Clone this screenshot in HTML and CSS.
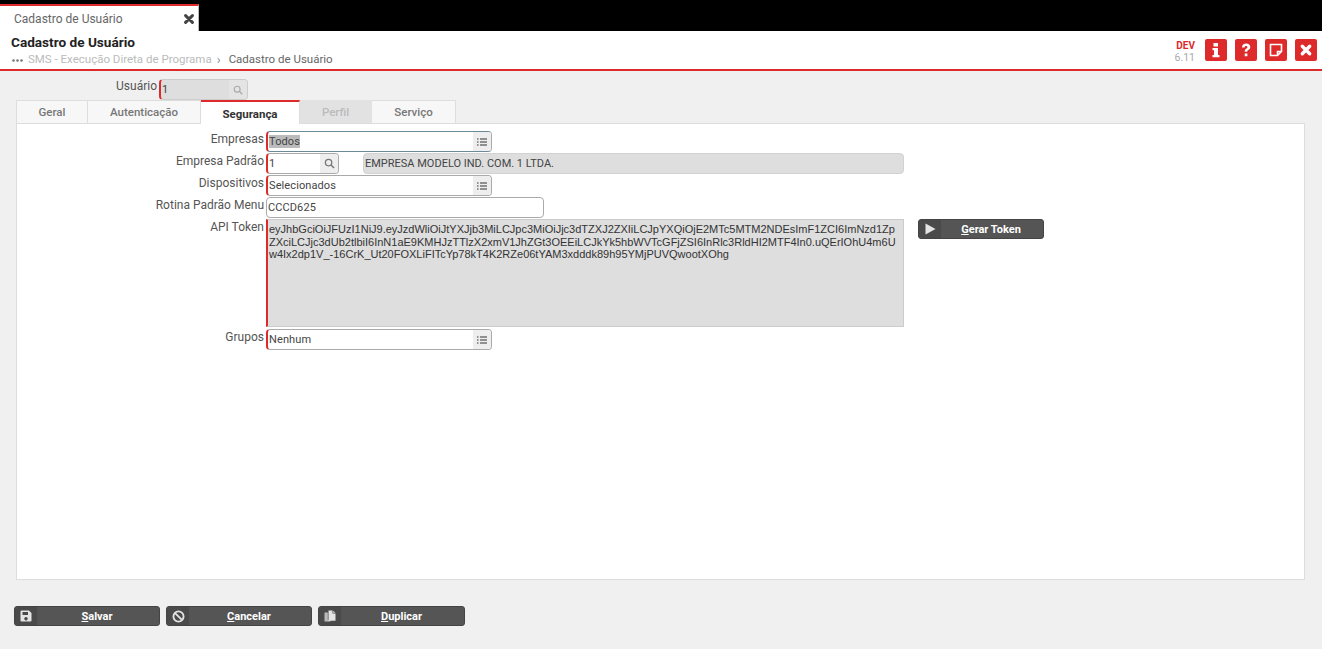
FILE: index.html
```html
<!DOCTYPE html>
<html lang="pt-BR">
<head>
<meta charset="utf-8">
<title>Cadastro de Usuário</title>
<link rel="stylesheet" href="styles.css">
</head>
<body>
<div class="topbar">
  <div class="doc-tab">
    <span class="doc-tab-title">Cadastro de Usuário</span>
    <svg class="doc-tab-close" viewBox="0 0 10 10" width="10" height="10"><path d="M1.600 1.600 8.400 8.400M8.400 1.600 1.600 8.400" stroke="#444" stroke-width="3" stroke-linecap="round"/></svg>
  </div>
</div>
<header class="header">
  <div class="header-text">
    <div class="page-title">Cadastro de Usuário</div>
    <div class="crumbs"><svg class="crumb-dots" viewBox="0 0 11 3" width="11" height="3"><circle cx="1.500" cy="1.500" r="1.300" fill="#777"/><circle cx="5.500" cy="1.500" r="1.300" fill="#777"/><circle cx="9.500" cy="1.500" r="1.300" fill="#777"/></svg><span class="crumb-light">SMS - Execução Direta de Programa</span><span class="crumb-sep">›</span><span class="crumb-current">Cadastro de Usuário</span></div>
  </div>
  <div class="env"><span class="env-name">DEV</span><span class="env-version">6.11</span></div>
  <div class="tools">
    <button class="tool"><svg viewBox="0 0 22 22" width="22" height="22"><path d="M8.500 4h4.500v3.400H8.500zM7.500 9h5.500v7h1.500v2.200h-7V16h1.500v-4.800H7.500z" fill="#fff"/></svg></button>
    <button class="tool"><svg viewBox="0 0 22 22" width="22" height="22"><path d="M7 8.500C7 6 8.700 4.500 11.200 4.500c2.400 0 4.100 1.400 4.100 3.500 0 1.600-.9 2.400-2 3.100-.8.500-1 .8-1 1.700H9.700c0-1.700.4-2.400 1.500-3.100.8-.5 1.200-.9 1.200-1.500 0-.7-.5-1.100-1.300-1.100-.9 0-1.400.5-1.500 1.500zM9.700 14.500h2.700v2.800H9.700z" fill="#fff"/></svg></button>
    <button class="tool"><svg viewBox="0 0 22 22" width="22" height="22"><path d="M5.500 5.500h11v7l-4 4h-7zM12.500 16.500v-4h4" fill="none" stroke="#fff" stroke-width="1.600"/></svg></button>
    <button class="tool"><svg viewBox="0 0 22 22" width="22" height="22"><path d="M7.300 7.300 14.700 14.700M14.700 7.300 7.300 14.700" stroke="#fff" stroke-width="3.400" stroke-linecap="round"/></svg></button>
  </div>
</header>
<main class="main">
  <div class="user-row">
    <label class="label user-label">Usuário</label>
    <div class="field field-user req disabled"><span class="value">1</span><span class="addon addon-disabled"><svg viewBox="0 0 12 12" width="10" height="10"><circle cx="5" cy="5" r="3.500" fill="none" stroke="#aaa" stroke-width="1.400"/><path d="M7.600 7.600 11 11" stroke="#aaa" stroke-width="1.600"/></svg></span></div>
  </div>
  <nav class="tabs">
    <div class="tab tab-geral">Geral</div>
    <div class="tab tab-aut">Autenticação</div>
    <div class="tab tab-seg active">Segurança</div>
    <div class="tab tab-perfil off">Perfil</div>
    <div class="tab tab-serv">Serviço</div>
  </nav>
  <section class="panel">
    <div class="row">
      <label class="label">Empresas</label>
      <div class="field field-select req focused"><span class="value"><span class="selected">Todos</span></span><span class="addon"><svg class="list-ico" viewBox="0 0 10 8" width="10" height="8"><path d="M0 1h1.500M3 1h7M0 4h1.500M3 4h7M0 7h1.500M3 7h7" stroke="#333" stroke-width="1.200"/></svg></span></div>
    </div>
    <div class="row">
      <label class="label">Empresa Padrão</label>
      <div class="field field-code req"><span class="value">1</span><span class="addon"><svg viewBox="0 0 12 12" width="11" height="11"><circle cx="5" cy="5" r="3.500" fill="none" stroke="#777" stroke-width="1.400"/><path d="M7.600 7.600 11 11" stroke="#777" stroke-width="1.600"/></svg></span></div>
      <div class="desc">EMPRESA MODELO IND. COM. 1 LTDA.</div>
    </div>
    <div class="row">
      <label class="label">Dispositivos</label>
      <div class="field field-select req"><span class="value">Selecionados</span><span class="addon"><svg class="list-ico" viewBox="0 0 10 8" width="10" height="8"><path d="M0 1h1.500M3 1h7M0 4h1.500M3 4h7M0 7h1.500M3 7h7" stroke="#333" stroke-width="1.200"/></svg></span></div>
    </div>
    <div class="row">
      <label class="label">Rotina Padrão Menu</label>
      <div class="field field-text"><span class="value value-plain">CCCD625</span></div>
    </div>
    <div class="row row-token">
      <label class="label">API Token</label>
      <div class="token">eyJhbGciOiJFUzI1NiJ9.eyJzdWliOiJtYXJjb3MiLCJpc3MiOiJjc3dTZXJ2ZXIiLCJpYXQiOjE2MTc5MTM2NDEsImF1ZCI6ImNzd1ZpZXciLCJjc3dUb2tlbiI6InN1aE9KMHJzTTlzX2xmV1JhZGt3OEEiLCJkYk5hbWVTcGFjZSI6InRlc3RldHI2MTF4In0.uQErIOhU4m6Uw4Ix2dp1V_-16CrK_Ut20FOXLiFITcYp78kT4K2RZe06tYAM3xdddk89h95YMjPUVQwootXOhg</div>
      <button class="btn btn-token"><span class="btn-ico"><svg viewBox="0 0 12 12" width="12" height="12"><path d="M1.500 .5 11.500 6 1.500 11.500z" fill="#e4e4e4"/></svg></span><span class="btn-text"><u>G</u>erar Token</span></button>
    </div>
    <div class="row row-groups">
      <label class="label">Grupos</label>
      <div class="field field-select req"><span class="value">Nenhum</span><span class="addon"><svg class="list-ico" viewBox="0 0 10 8" width="10" height="8"><path d="M0 1h1.500M3 1h7M0 4h1.500M3 4h7M0 7h1.500M3 7h7" stroke="#333" stroke-width="1.200"/></svg></span></div>
    </div>
  </section>
  <div class="actions">
    <button class="btn btn-action"><span class="btn-ico"><svg viewBox="0 0 12 12" width="12" height="12"><path d="M1.500.5h7.500l2.500 2.500v7.500q0 1-1 1H1.500q-1 0-1-1v-9q0-1 1-1zM2.500 2v3h5.500V2zM6 7a1.700 1.700 0 1 0 .01 0z" fill="#e4e4e4" fill-rule="evenodd"/></svg></span><span class="btn-text"><u>S</u>alvar</span></button>
    <button class="btn btn-action"><span class="btn-ico"><svg viewBox="0 0 12 12" width="13" height="13"><circle cx="6" cy="6" r="4.700" fill="none" stroke="#e4e4e4" stroke-width="1.700"/><path d="M2.800 2.800l6.400 6.400" stroke="#e4e4e4" stroke-width="1.700"/></svg></span><span class="btn-text"><u>C</u>ancelar</span></button>
    <button class="btn btn-action btn-wide"><span class="btn-ico"><svg viewBox="0 0 12 12" width="12" height="12"><path d="M.5 2.500h3.300v7.500h2.700v1.500H.5z" fill="#bbb"/><path d="M4.500.5h4v3h3v7.200h-7zM9.200.7l2.100 2.100H9.200z" fill="#e4e4e4"/></svg></span><span class="btn-text"><u>D</u>uplicar</span></button>
  </div>
</main>
</body>
</html>
```
FILE: styles.css
```css
* { box-sizing: border-box; }
html, body { height: 100%; }
body {
  margin: 0;
  background: #f0f0f0;
  font-family: Roboto, "Liberation Sans", sans-serif;
  font-size: 12px;
  color: #444;
  overflow: hidden;
}
button { font-family: inherit; padding: 0; cursor: pointer; }

.topbar { height: 31px; background: #000; padding-top: 4px; }
.doc-tab {
  width: 199px;
  height: 27px;
  background: #fff;
  border-top: 2px solid #dd2a2a;
  border-right: 1px solid #bbb;
  display: flex;
  justify-content: space-between;
  padding: 6px 4px 0 14px;
}
.doc-tab-title { font-size: 12px; line-height: 15px; color: #666; }
.doc-tab-close { margin-top: 2px; }

.header {
  height: 40px;
  background: #fff;
  border-bottom: 2px solid #dd2a2a;
  display: flex;
  align-items: flex-start;
  padding: 0 5px 0 11px;
}
.header-text { flex: 1; }
.page-title { font-size: 13.600px; font-weight: 700; line-height: 17px; margin-top: 3px; color: #222; }
.crumbs { display: flex; align-items: center; font-size: 11.500px; line-height: 15px; margin-top: 1px; color: #bbb; }
.crumb-dots { margin: 2px 5px 0 1px; }
.crumb-sep { margin: 0 8px 0 5px; font-size: 13px; color: #888; }
.crumb-current { color: #666; }
.env { display: flex; flex-direction: column; align-items: flex-end; margin: 8px 10px 0 0; font-size: 10px; line-height: 13px; }
.env-name { color: #dd2a2a; font-weight: 700; }
.env-version { color: #aaa; font-size: 10.500px; line-height: 12px; }
.tools { display: flex; gap: 8px; margin-top: 8px; }
.tool {
  width: 22px; height: 22px;
  border: 0; border-radius: 2px;
  background: #dd2a2a;
  display: flex; align-items: center; justify-content: center;
}

.main { padding: 8px 17px 0 16px; }
.label { color: #555; font-size: 12px; line-height: 16px; text-align: right; }

.user-row { display: flex; height: 21px; }
.user-label { width: 141px; margin-right: 2px; line-height: 15px; }

.field {
  height: 21px;
  background: #fff;
  border: 1px solid #aaa;
  border-radius: 4px;
  display: flex;
  overflow: hidden;
}
.req { border-left: 2px solid #dd2a2a; }
.focused { border-top-color: #6d8a99; border-bottom-color: #6d8a99; }
.disabled { background: #dedede; border-color: #ccc; border-left-color: #dd2a2a; }
.field-user { width: 89px; }
.field-select { width: 226px; }
.field-code { width: 73px; }
.field-text { width: 278px; }
.value { flex: 1; font-size: 11px; line-height: 19px; padding-left: 1px; color: #444; white-space: nowrap; letter-spacing: .1px; }
.value-plain { padding-left: 1px; }
.selected { background: #bbb; }
.addon {
  width: 18px;
  background: #eee;
  display: flex; align-items: center; justify-content: center;
}
.addon-disabled { background: #e4e4e4; }

.tabs { display: flex; height: 23px; }
.tab {
  height: 23px;
  background: #f7f7f7;
  border: 1px solid #ddd;
  border-left: 0;
  border-bottom: 0;
  font-size: 11.500px;
  font-weight: 500;
  color: #777;
  text-align: center;
  line-height: 23px;
}
.tab-geral { width: 72px; border-left: 1px solid #ddd; }
.tab-aut { width: 113px; }
.tab-seg { width: 99px; }
.tab-perfil { width: 72px; }
.tab-serv { width: 84px; }
.active {
  background: #fff;
  border-top: 2px solid #dd2a2a;
  color: #333;
  font-weight: 700;
  line-height: 24px;
  height: 24px;
  position: relative;
  z-index: 1;
}
.off { background: #e2e2e2; color: #bbb; border-color: #e2e2e2; }

.panel {
  height: 457px;
  background: #fff;
  border: 1px solid #ddd;
  padding: 7px 0 0;
}
.row { display: flex; height: 22px; }
.row > .label { width: 247px; margin-right: 2px; line-height: 17px; }
.row-token { height: 110px; }
.desc {
  width: 541px;
  height: 21px;
  margin-left: 24px;
  padding-left: 1px;
  background: #dedede;
  border: 1px solid #d2d2d2;
  border-radius: 4px;
  font-size: 11px;
  line-height: 19px;
  color: #444;
  white-space: nowrap;
}
.token {
  width: 638px;
  height: 108px;
  background: #dedede;
  border: 1px solid #ccc;
  border-left: 2px solid #dd2a2a;
  padding: 3px 4px 0 1px;
  font-family: "Liberation Sans", Arial, sans-serif;
  font-size: 11px;
  line-height: 12.500px;
  color: #333;
  word-break: break-all;
}
.btn {
  height: 20px;
  background: #555;
  border: 1px solid #444;
  border-radius: 3px;
  display: flex;
  color: #fff;
  font-size: 11px;
  font-weight: 700;
  line-height: 20px;
  overflow: hidden;
}
.btn-ico {
  width: 22px; height: 100%;
  background: #4a4a4a;
  display: flex; align-items: center; justify-content: center;
}
.btn-text { flex: 1; text-align: center; padding-right: 2px; }
.btn-token { width: 126px; margin-left: 14px; }
.actions { display: flex; gap: 6px; margin: 26px 0 0 -2px; }
.btn-action { width: 146px; }
.btn-wide { width: 147px; }
```
